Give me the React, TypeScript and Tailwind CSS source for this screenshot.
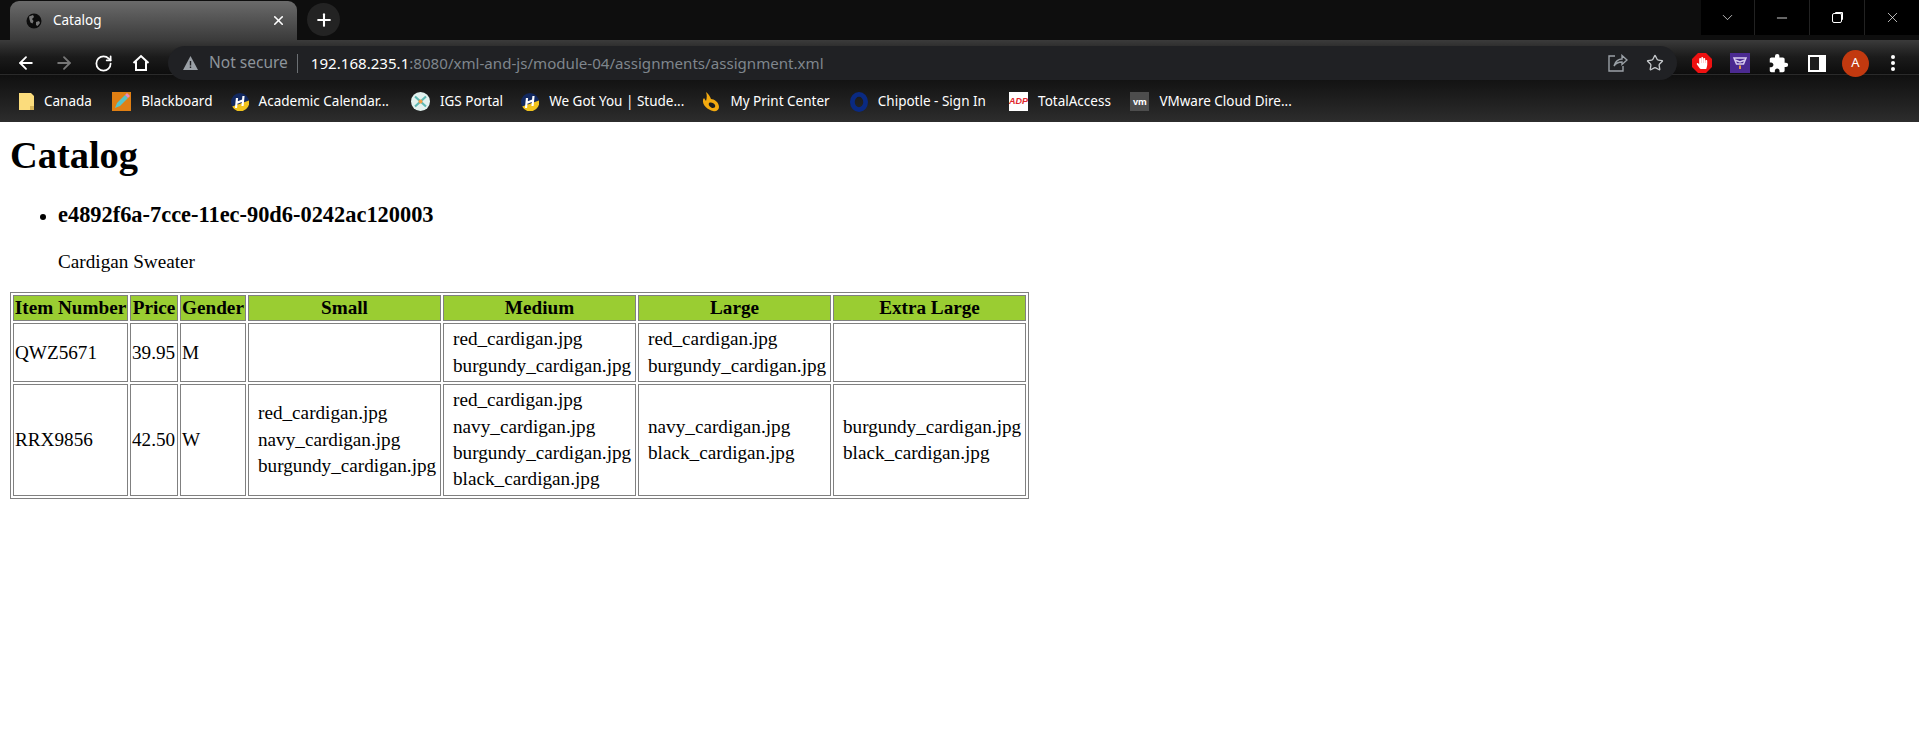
import React from "react";
import { ArrowLeft, ArrowRight, RotateCw, Plus, X, Star, ChevronDown, Minus } from "lucide-react";
import { MdExtension } from "react-icons/md";
import { FaHandPaper } from "react-icons/fa";

const Globe = () => (
  <svg width="16" height="16" viewBox="0 0 16 16">
    <circle cx="8" cy="8" r="7.500" fill="#0c0c0c" />
    <path d="M3 3.500l4-1.500 1 2-2 2 1.500 2-1 2.500-2-1-1-3zM10 9l3-1 1 2-2.500 3-1.500-1z" fill="#777" />
  </svg>
);

const House = () => (
  <svg width="18" height="18" viewBox="0 0 18 18" fill="none" stroke="white" strokeWidth="2">
    <path d="M1.500 9L9 2l7.500 7M4 7.500V16h10V7.500" />
  </svg>
);

const Folder = () => (
  <svg width="15" height="17" viewBox="0 0 15 17">
    <path d="M0 0h12l3 3v14H0z" fill="#fbdc7c" />
    <path d="M11 13h4v4h-4z" fill="#d9b658" />
  </svg>
);

const Pencil = () => (
  <svg width="19" height="19" viewBox="0 0 19 19">
    <rect width="19" height="19" fill="#e07f13" />
    <path d="M3 16l2-5 8-8 3 3-8 8z" fill="#58c4c8" />
    <path d="M13 3l2-2 3 3-2 2z" fill="#e78ac0" />
  </svg>
);

const Humber = () => (
  <svg width="18" height="18" viewBox="0 0 18 18">
    <circle cx="9" cy="9" r="9" fill="#12285f" />
    <path d="M1.200 13.500L18 7.500A9 9 0 0 1 1.200 13.500z" fill="#f1c31e" />
    <path d="M6 5l-1 10M5.500 10l6-2.500M12.500 3l-1 10" stroke="white" strokeWidth="2.200" fill="none" />
  </svg>
);

const Igs = () => (
  <svg width="19" height="19" viewBox="0 0 19 19">
    <circle cx="9.500" cy="9.500" r="9.500" fill="#e3f2ef" />
    <path d="M4 4.500l11 10M15 4.500l-11 10" stroke="#5fb8b2" strokeWidth="2.200" fill="none" />
    <circle cx="9.500" cy="9.500" r="2" fill="#ef9b45" />
  </svg>
);

const Flame = () => (
  <svg width="18" height="20" viewBox="0 0 18 20">
    <path d="M4 0c3 2 4 5 5 7 3 0 8 3 8 8 0 3-3 5-6 4C6 18 0 13 1 8c0-1 1-2 1-2l2 3C5 6 5 3 4 0z" fill="#f2a90f" />
    <path d="M7 11c2-1 5 0 6 2 1 3-2 3-3 3-2-1-4-3-3-5z" fill="#1c1c1c" />
  </svg>
);

const Ring = () => (
  <svg width="19" height="20" viewBox="0 0 19 20">
    <ellipse cx="9.500" cy="10" rx="7" ry="8" fill="none" stroke="#0a2a82" strokeWidth="5" />
  </svg>
);

const Adp = () => (
  <div className="w-[19px] h-[19px] bg-white flex items-center justify-center text-[#e0262d] text-[9px] font-bold italic leading-none overflow-hidden font-['Liberation_Sans',sans-serif]">
    ADP
  </div>
);

const Vm = () => (
  <div className="w-[19px] h-[19px] bg-[#4d4d4d] flex items-center justify-center text-white text-[9px] font-bold leading-none">
    vm
  </div>
);

const bookmarks = [
  { icon: <Folder />, label: "Canada", width: "w-[48px]", iconBox: "w-[16px]" },
  { icon: <Pencil />, label: "Blackboard", width: "w-[69px]", iconBox: "w-[19px]" },
  { icon: <Humber />, label: "Academic Calendar...", width: "w-[132px]", iconBox: "w-[18px]" },
  { icon: <Igs />, label: "IGS Portal", width: "w-[61px]", iconBox: "w-[19px]" },
  { icon: <Humber />, label: "We Got You | Stude...", width: "w-[133px]", iconBox: "w-[18px]" },
  { icon: <Flame />, label: "My Print Center", width: "w-[99px]", iconBox: "w-[18px]" },
  { icon: <Ring />, label: "Chipotle - Sign In", width: "w-[111px]", iconBox: "w-[18px]" },
  { icon: <Adp />, label: "TotalAccess", width: "w-[72px]", iconBox: "w-[19px]" },
  { icon: <Vm />, label: "VMware Cloud Dire...", width: "w-[134px]", iconBox: "w-[19px]" },
];

const rows = [
  {
    item: "QWZ5671",
    price: "39.95",
    gender: "M",
    height: "h-[59px]",
    sizes: [
      [],
      ["red_cardigan.jpg", "burgundy_cardigan.jpg"],
      ["red_cardigan.jpg", "burgundy_cardigan.jpg"],
      [],
    ],
  },
  {
    item: "RRX9856",
    price: "42.50",
    gender: "W",
    height: "h-[112px]",
    sizes: [
      ["red_cardigan.jpg", "navy_cardigan.jpg", "burgundy_cardigan.jpg"],
      ["red_cardigan.jpg", "navy_cardigan.jpg", "burgundy_cardigan.jpg", "black_cardigan.jpg"],
      ["navy_cardigan.jpg", "black_cardigan.jpg"],
      ["burgundy_cardigan.jpg", "black_cardigan.jpg"],
    ],
  },
];

const headers = [
  { label: "Item Number", width: "w-[115px]" },
  { label: "Price", width: "w-[48px]" },
  { label: "Gender", width: "w-[66px]" },
  { label: "Small", width: "w-[193px]" },
  { label: "Medium", width: "w-[193px]" },
  { label: "Large", width: "w-[193px]" },
  { label: "Extra Large", width: "w-[193px]" },
];

const Chrome = () => (
  <div className="font-['Noto_Sans',sans-serif]">
    {/* tab strip */}
    <div className="h-[40px] bg-[#0e0e0e] flex items-end pl-[10px]">
      <div className="w-[287px] h-[39px] rounded-t-[9px] bg-gradient-to-b from-[#6b6b6b] to-[#3b3b3b] flex items-center pl-[16px] pr-[11px] text-white">
        <Globe />
        <span className="ml-[11px] text-[13.500px] leading-none">Catalog</span>
        <X size={15} strokeWidth={2.5} className="ml-auto" />
      </div>
      <div className="ml-[10px] mb-[4px] w-[33px] h-[33px] rounded-full bg-[#232323] flex items-center justify-center text-white">
        <Plus size={20} strokeWidth={2.5} />
      </div>
      <div className="ml-auto self-start h-[35px] w-[218px] bg-black flex items-center text-white divide-x divide-[#222]">
        <div className="w-[54px] h-full flex items-center justify-center"><ChevronDown size={17} strokeWidth={1} /></div>
        <div className="w-[55px] h-full flex items-center justify-center"><Minus size={16} strokeWidth={1.2} /></div>
        <div className="w-[55px] h-full flex items-center justify-center">
          <div className="w-[10px] h-[10px] mt-[1px] border border-white rounded-[2px] shadow-[2px_-2px_0_-1px_white]" />
        </div>
        <div className="w-[54px] h-full flex items-center justify-center"><X size={17} strokeWidth={1} /></div>
      </div>
    </div>

    {/* toolbar, the address pill hangs over the top of the bookmarks bar */}
    <div className="h-[34px] bg-gradient-to-b from-[#3b3b3b] via-[#1b1b1b] to-[#0d0d0d] relative z-10">
      <div className="h-[34px] translate-y-[6px] flex items-center pl-[16px] text-white">
        <ArrowLeft size={20} strokeWidth={2.2} />
        <ArrowRight size={20} strokeWidth={2.2} className="ml-[18px] text-[#777]" />
        <RotateCw size={19} strokeWidth={2.2} className="ml-[20px]" />
        <span className="ml-[19px]"><House /></span>
        <div className="ml-[18px] w-[1509px] h-[34px] rounded-full bg-[#202124] flex items-center pl-[15px] pr-[13px]">
          <svg width="15" height="14" viewBox="0 0 15 14"><path d="M7.500 0L15 14H0z" fill="#9aa0a6" /><path d="M6.800 5h1.400v4.500H6.800zM6.800 10.500h1.400V12H6.800z" fill="#202124" /></svg>
          <span className="ml-[11px] text-[15.500px] text-[#8d949b]">Not secure</span>
          <div className="ml-[9px] w-px h-[19px] bg-[#6b6f73]" />
          <span className="ml-[13px] text-[15.100px] text-[#7f868d] whitespace-nowrap">
            <span className="text-white">192.168.235.1</span>:8080/xml-and-js/module-04/assignments/assignment.xml
          </span>
          <svg className="ml-auto" width="20" height="18" viewBox="0 0 20 18" fill="none" stroke="#9aa0a6" strokeWidth="1.400">
            <path d="M7 2H1v15h14v-5M6 12c1-5 5-7 8-7V1.500L19 6l-5 4.500V8c-3 0-6 1-8 4z" />
          </svg>
          <Star size={18} strokeWidth={1.8} className="ml-[18px] text-[#c5c8cb]" />
        </div>
        <div className="ml-[15px] w-[20px] h-[20px] [clip-path:polygon(30%_0,70%_0,100%_30%,100%_70%,70%_100%,30%_100%,0_70%,0_30%)] bg-[#ee1111] flex items-center justify-center">
          <FaHandPaper size={12} color="white" />
        </div>
        <div className="ml-[18px] w-[20px] h-[20px] bg-[#4b2a91] flex items-center justify-center">
          <svg width="16" height="16" viewBox="0 0 16 16" fill="none" stroke="#d9cdf0" strokeWidth="1.500"><path d="M2 3h12l-2.500 6h-7zM3 5l5 2 5-2" /><path d="M7 10.500h2V14H7z" fill="#e89a45" stroke="none" /></svg>
        </div>
        <MdExtension size={21} className="ml-[18px]" />
        <div className="ml-[19px] w-[18px] h-[17px] bg-white flex items-center pl-[2px]">
          <div className="w-[9px] h-[13px] bg-[#1c1c1c]" />
        </div>
        <div className="ml-[16px] w-[27px] h-[27px] rounded-full bg-[#c2390f] flex items-center justify-center text-[13px]">A</div>
        <div className="ml-[22px] flex flex-col gap-[2px]">
          <span className="w-[4px] h-[4px] rounded-full bg-white" />
          <span className="w-[4px] h-[4px] rounded-full bg-white" />
          <span className="w-[4px] h-[4px] rounded-full bg-white" />
        </div>
      </div>
    </div>

    {/* bookmarks */}
    <div className="h-[48px] border-t border-[#2a2a2a] bg-gradient-to-b from-[#101010] to-[#2d2d2d] flex items-center pt-[6px] pl-[18px] gap-[20.300px] text-white text-[13.500px]">
      {bookmarks.map((b) => (
        <div key={b.label} className="flex items-center gap-[10px]">
          <div className={`${b.iconBox} flex justify-center`}>{b.icon}</div>
          <span className={`${b.width} whitespace-nowrap`}>{b.label}</span>
        </div>
      ))}
    </div>
  </div>
);

const App = () => {
  return (
    <div className="h-[735px] bg-white overflow-hidden">
      <Chrome />
      <div className="font-['Liberation_Serif',serif] text-[19.200px] leading-[22px] text-black pl-[10px] pt-[11px]">
        <h1 className="text-[38.400px] leading-[44px] font-bold">Catalog</h1>
        <ul className="list-disc pl-[48px] mt-[25px]">
          <li>
            <h3 className="text-[22.400px] leading-[26px] font-bold">e4892f6a-7cce-11ec-90d6-0242ac120003</h3>
            <p className="mt-[23px]">Cardigan Sweater</p>
          </li>
        </ul>
        <table className="mt-[19px] border-separate border-spacing-[2px] border border-[#808080] table-fixed w-[1019px]">
          <thead>
            <tr>
              {headers.map((h) => (
                <th key={h.label} className={`${h.width} h-[26px] bg-[#9acd32] border border-[#808080] p-0 font-bold text-center leading-[22px]`}>
                  {h.label}
                </th>
              ))}
            </tr>
          </thead>
          <tbody>
            {rows.map((r) => (
              <tr key={r.item} className={r.height}>
                <td className="border border-[#808080] px-[1px]">{r.item}</td>
                <td className="border border-[#808080] px-[1px]">{r.price}</td>
                <td className="border border-[#808080] px-[1px]">{r.gender}</td>
                {r.sizes.map((files, i) => (
                  <td key={i} className="border border-[#808080] pl-[9px] align-middle">
                    {files.map((f) => (
                      <div key={f} className="leading-[26.400px]">{f}</div>
                    ))}
                  </td>
                ))}
              </tr>
            ))}
          </tbody>
        </table>
      </div>
    </div>
  );
};

export default App;
